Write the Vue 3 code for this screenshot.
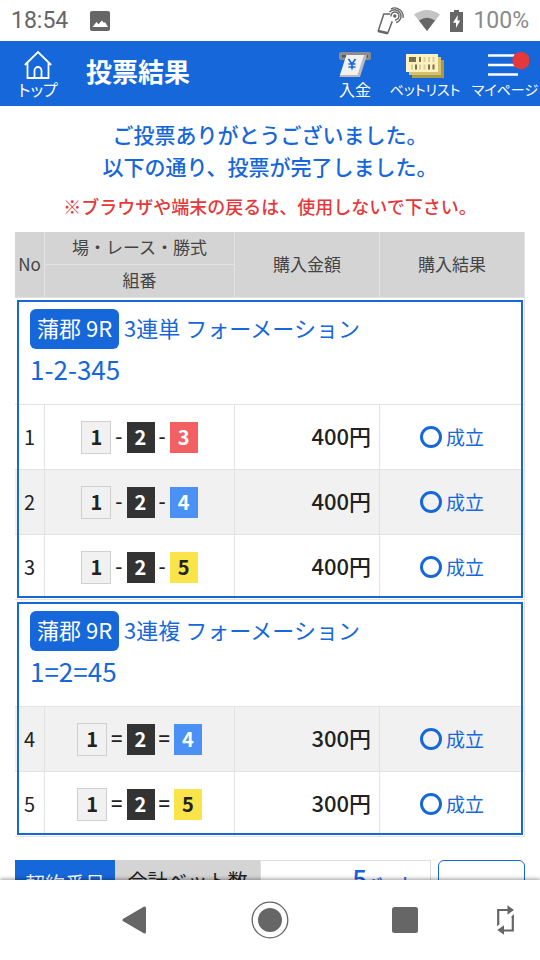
<script setup>
const groups = [
  {
    race: '蒲郡 9R',
    type: '3連単 フォーメーション',
    combo: '1-2-345',
    sep: '-',
    bets: [
      { no: 1, boats: [1, 2, 3], amount: 400 },
      { no: 2, boats: [1, 2, 4], amount: 400 },
      { no: 3, boats: [1, 2, 5], amount: 400 },
    ],
  },
  {
    race: '蒲郡 9R',
    type: '3連複 フォーメーション',
    combo: '1=2=45',
    sep: '=',
    bets: [
      { no: 4, boats: [1, 2, 4], amount: 300 },
      { no: 5, boats: [1, 2, 5], amount: 300 },
    ],
  },
]
</script>

<template>
  <div class="screen">
    <div class="status">
      <span class="clock">18:54</span>
      <svg class="photo" width="20" height="20" viewBox="0 0 20 20">
        <rect width="20" height="20" rx="2" fill="#666" />
        <path d="M2.500 16 6.500 11l2 2.300L12 9.500l2 2.500 1-1 3 5z" fill="#fff" />
      </svg>
      <div class="indicators">
        <svg width="28" height="28" viewBox="0 0 28 28" fill="none" stroke="#666">
          <path d="M14 7H7.800L2.200 24l9.500 2.200 4.600-12" stroke-width="1.500" stroke-linejoin="round" />
          <path d="M2.200 24l9.500 2.200" stroke-width="2.500" />
          <circle cx="18.800" cy="9" r="1.800" fill="#666" stroke="none" />
          <path d="M15 9.500a4 4 0 1 1 4 3.500M13.500 5a6.500 6.500 0 1 1 6.500 10.500M15 1.800a8.500 8.500 0 0 1 12 9" stroke-width="1.400" />
        </svg>
        <svg width="26" height="21" viewBox="0 0 26 21">
          <path d="M13 21 0 4.500Q13-4.500 26 4.500z" fill="#c4c4c4" />
          <path d="M13 21 5 10.500q8-5.500 16 0z" fill="#666" />
        </svg>
        <svg width="13" height="22" viewBox="0 0 13 22">
          <path d="M4 0h5v2h4v20H0V2h4z" fill="#666" />
          <path d="M7.800 5 3 12.800h3V18l4.200-7.500H7.500z" fill="#fff" />
        </svg>
        <span class="charge">100%</span>
      </div>
    </div>

    <div class="page">
      <header class="bar">
        <a class="item" href="#">
          <svg width="28" height="30" viewBox="0 0 28 30" fill="none" stroke="#fff" stroke-width="1.800">
            <path d="M.8 16 14 3l13.200 13M3.500 13.500V29h21V13.500M10.500 29V21.500a3.500 3.500 0 0 1 7 0V29" />
          </svg>
          <span>トップ</span>
        </a>
        <h1>投票結果</h1>
        <nav class="links">
          <a class="item deposit" href="#">
            <svg width="32" height="30" viewBox="0 0 32 30">
              <rect y="3" width="32" height="8" rx="2" fill="#8b8d91" />
              <rect x="3" y="6" width="26" height="2.500" fill="#55585d" />
              <path d="M7.500 6H28l-7 22H.5z" fill="#b9b9b9" />
              <path d="M7.500 6H25l-6.500 20H1z" fill="#f1f1f1" />
              <path d="m9.500 10 3.500 5 3.500-5M13 15v5.500M9.500 15h7M9.500 18h7" fill="none" stroke="#1667da" stroke-width="1.600" />
            </svg>
            <span>入金</span>
          </a>
          <a class="item betlist" href="#">
            <svg width="38" height="30" viewBox="0 0 38 30">
              <path d="M6 11h32v18H6z" fill="#a89a4c" />
              <path d="M3 8h32v18H3z" fill="#d3c36e" />
              <path d="M0 5h32v18H0z" fill="#fdf2bd" />
              <path d="M3 8h7v5H3zM13 8h2v5h-2zM9 15.500h2v5H9zM22 15.500h2v5h-2zM26.500 15.500h2v5h-2z" fill="#77704e" />
              <path d="M17.500 8h2v5h-2zM22 8h2v5h-2zM26.500 8h2v5h-2zM5 15.500h2v5H5zM13 15.500h2v5h-2zM17.500 15.500h2v5h-2z" fill="#d8cd9c" />
            </svg>
            <span>ベットリスト</span>
          </a>
          <a class="item mypage" href="#">
            <svg width="48" height="30" viewBox="0 0 48 30">
              <path d="M7 6.500h30M7 16h30M7 25.500h30" stroke="#fff" stroke-width="2.500" />
              <circle cx="40" cy="11.500" r="8.700" fill="#e5383b" />
            </svg>
            <span>マイページ</span>
          </a>
        </nav>
      </header>

      <main>
        <p class="thanks">ご投票ありがとうございました。<br />以下の通り、投票が完了しました。</p>
        <p class="warn">※ブラウザや端末の戻るは、使用しないで下さい。</p>

        <table class="bets">
          <colgroup>
            <col class="c-no" />
            <col class="c-combo" />
            <col />
            <col />
          </colgroup>
          <thead>
            <tr>
              <th rowspan="2">No</th>
              <th>場・レース・勝式</th>
              <th rowspan="2">購入金額</th>
              <th rowspan="2">購入結果</th>
            </tr>
            <tr>
              <th>組番</th>
            </tr>
          </thead>
          <tbody v-for="g in groups" :key="g.combo">
            <tr>
              <td class="head" colspan="4">
                <div class="race"><span class="badge">{{ g.race }}</span><span class="type">{{ g.type }}</span></div>
                <div class="combo">{{ g.combo }}</div>
              </td>
            </tr>
            <tr v-for="b in g.bets" :key="b.no" class="bet" :class="{ even: b.no % 2 === 0 }">
              <td class="no">{{ b.no }}</td>
              <td>
                <div class="chips">
                  <template v-for="(n, i) in b.boats" :key="n">
                    <span v-if="i" class="sep">{{ g.sep }}</span>
                    <span class="chip" :class="'boat' + n">{{ n }}</span>
                  </template>
                </div>
              </td>
              <td class="amount">{{ b.amount }}円</td>
              <td>
                <div class="result"><i class="ring"></i><span class="state">成立</span></div>
              </td>
            </tr>
          </tbody>
        </table>

        <div class="summary">
          <div class="contract">契約番号</div>
          <div class="total">合計ベット数</div>
          <div class="count"><span class="num">5</span>ベット</div>
          <button class="action" type="button"></button>
        </div>
      </main>
    </div>

    <div class="sysnav">
      <button class="back" type="button">
        <svg width="26" height="30" viewBox="0 0 26 30">
          <path d="M2 15 22.500 3v24z" fill="#666" stroke="#666" stroke-width="3" stroke-linejoin="round" />
        </svg>
      </button>
      <button type="button">
        <svg width="38" height="38" viewBox="0 0 38 38">
          <circle cx="19" cy="19" r="17.800" fill="none" stroke="#666" stroke-width="1.300" />
          <circle cx="19" cy="19" r="12" fill="#666" />
        </svg>
      </button>
      <button type="button">
        <svg width="26" height="26" viewBox="0 0 26 26"><rect width="26" height="26" rx="2.500" fill="#666" /></svg>
      </button>
      <button type="button">
        <svg width="18" height="30" viewBox="0 0 18 30">
          <path d="M1.200 19V5H12M15.800 11v14.500H6" fill="none" stroke="#666" stroke-width="2.200" />
          <path d="M10.500.3 17 5l-6.500 4.700zM7 20.300.3 25 7 29.700zM.1 18h2.200v1.200L.1 21.400zM14.700 11.300l2.200-2.200V13h-2.200z" fill="#666" />
        </svg>
      </button>
    </div>
  </div>
</template>

<style>
body {
  background: #fff;
}
</style>

<style scoped>
.screen {
  display: flex;
  flex-direction: column;
  height: 100vh;
  overflow: hidden;
  color: #222;
  font-family: "Noto Sans CJK JP", sans-serif;
}
.screen * {
  box-sizing: border-box;
}
svg {
  display: block;
  flex: none;
}
.status {
  display: flex;
  flex: none;
  align-items: center;
  height: 41px;
  padding: 0 11px;
  color: #666;
  font: 400 23px/41px Roboto, sans-serif;
}
.photo {
  margin-left: 22px;
}
.indicators {
  display: flex;
  align-items: center;
  gap: 10px;
  margin-left: auto;
}
.charge {
  color: #8a8a8a;
}
.page {
  flex: 1;
  min-height: 0;
  overflow: hidden;
}
.bar {
  display: flex;
  align-items: center;
  height: 65px;
  padding-left: 10px;
  background: #1667da;
  color: #fff;
}
.item {
  display: flex;
  flex-direction: column;
  align-items: center;
  width: 56px;
  color: #fff;
  font-size: 16px;
  line-height: 20px;
  font-feature-settings: "palt";
  text-decoration: none;
  white-space: nowrap;
}
h1 {
  margin: 0 0 0 20px;
  padding-bottom: 6px;
  font-size: 26px;
  font-weight: 700;
  line-height: 40px;
}
.links {
  display: flex;
  gap: 9px;
  margin-left: auto;
}
.deposit {
  width: 50px;
}
.betlist {
  width: 72px;
  font-size: 14px;
}
.mypage {
  width: 70px;
  font-size: 14px;
}
main {
  padding: 12px 15px 0;
}
p {
  margin: 0;
  text-align: center;
  font-weight: 500;
}
.thanks {
  color: #1667da;
  font-size: 21px;
  line-height: 32px;
}
.warn {
  margin: 8px 0 10px;
  color: #e5383b;
  font-size: 18px;
  line-height: 32px;
}
.bets {
  width: 100%;
  table-layout: fixed;
  border-collapse: separate;
  border-spacing: 0;
}
.c-no {
  width: 30px;
}
.c-combo {
  width: 190px;
}
th,
td {
  padding: 0;
  border: solid #e3e3e3;
  border-width: 0 1px 1px 0;
}
th {
  height: 33px;
  padding-bottom: 2px;
  background: #d4d4d4;
  color: #444;
  font-size: 17px;
  font-weight: 400;
  line-height: 24px;
}
tbody {
  outline: 2px solid #1667da;
  outline-offset: -4px;
}
.head {
  height: 107px;
  padding: 11px 15px 15px;
  color: #1667da;
}
.race {
  display: flex;
  align-items: center;
  gap: 5px;
  font-size: 22px;
  line-height: 36px;
}
.badge,
.type {
  padding-bottom: 4px;
}
.badge {
  padding-left: 7px;
  padding-right: 7px;
  border-radius: 6px;
  background: #1667da;
  color: #fff;
}
.combo {
  font-size: 26px;
  line-height: 40px;
}
.bet td {
  height: 65px;
}
.even td {
  background: #f1f1f1;
}
.bet .no {
  padding-bottom: 2px;
  text-align: center;
  font-size: 20px;
}
.chips {
  display: flex;
  align-items: center;
  justify-content: center;
  gap: 4px;
  font-size: 20px;
  line-height: 29px;
}
.sep {
  padding-bottom: 4px;
  font-weight: 500;
}
.chip {
  width: 28px;
  padding-bottom: 2px;
  font-weight: 700;
  text-align: center;
}
.boat1 {
  width: 30px;
  border: 1px solid #d0d0d0;
  background: #f1f1f1;
}
.boat2 {
  background: #333;
  color: #fff;
}
.boat3 {
  background: #f26062;
  color: #fff;
}
.boat4 {
  background: #4a90f5;
  color: #fff;
}
.boat5 {
  background: #fbe34a;
}
.bet .amount {
  padding: 0 8px 4px 0;
  text-align: right;
  font-size: 22px;
  font-weight: 500;
}
.result {
  display: flex;
  align-items: center;
  justify-content: center;
  gap: 4px;
  color: #1667da;
  font-size: 19px;
}
.state {
  padding-bottom: 2px;
}
.ring {
  width: 22px;
  height: 22px;
  border: 3px solid #1667da;
  border-radius: 50%;
}
.summary {
  display: flex;
  align-items: flex-start;
  margin-top: 23px;
  font-size: 20px;
  line-height: 42px;
  text-align: center;
}
.contract {
  width: 100px;
  background: #1667da;
  color: #fff;
  line-height: 48px;
}
.total {
  width: 145px;
  background: #d4d4d4;
}
.count {
  flex: 1;
  padding-right: 15px;
  border: 1px solid #ddd;
  color: #1667da;
  font-size: 16px;
  font-weight: 500;
  line-height: 34px;
  text-align: right;
}
.num {
  font-size: 26px;
}
.action {
  width: 87px;
  height: 52px;
  margin-left: 7px;
  border: 1px solid #1667da;
  border-radius: 6px;
  background: #fff;
}
.sysnav {
  position: relative;
  display: grid;
  flex: none;
  grid-template-columns: 1fr 2fr 2fr 2fr 1fr;
  height: 80px;
  background: #fff;
  box-shadow: 0 -1px 4px rgba(0, 0, 0, 0.4);
}
.sysnav button {
  display: flex;
  align-items: center;
  justify-content: center;
  padding: 0;
  border: 0;
  background: none;
}
.back {
  grid-column: 2;
}
</style>
